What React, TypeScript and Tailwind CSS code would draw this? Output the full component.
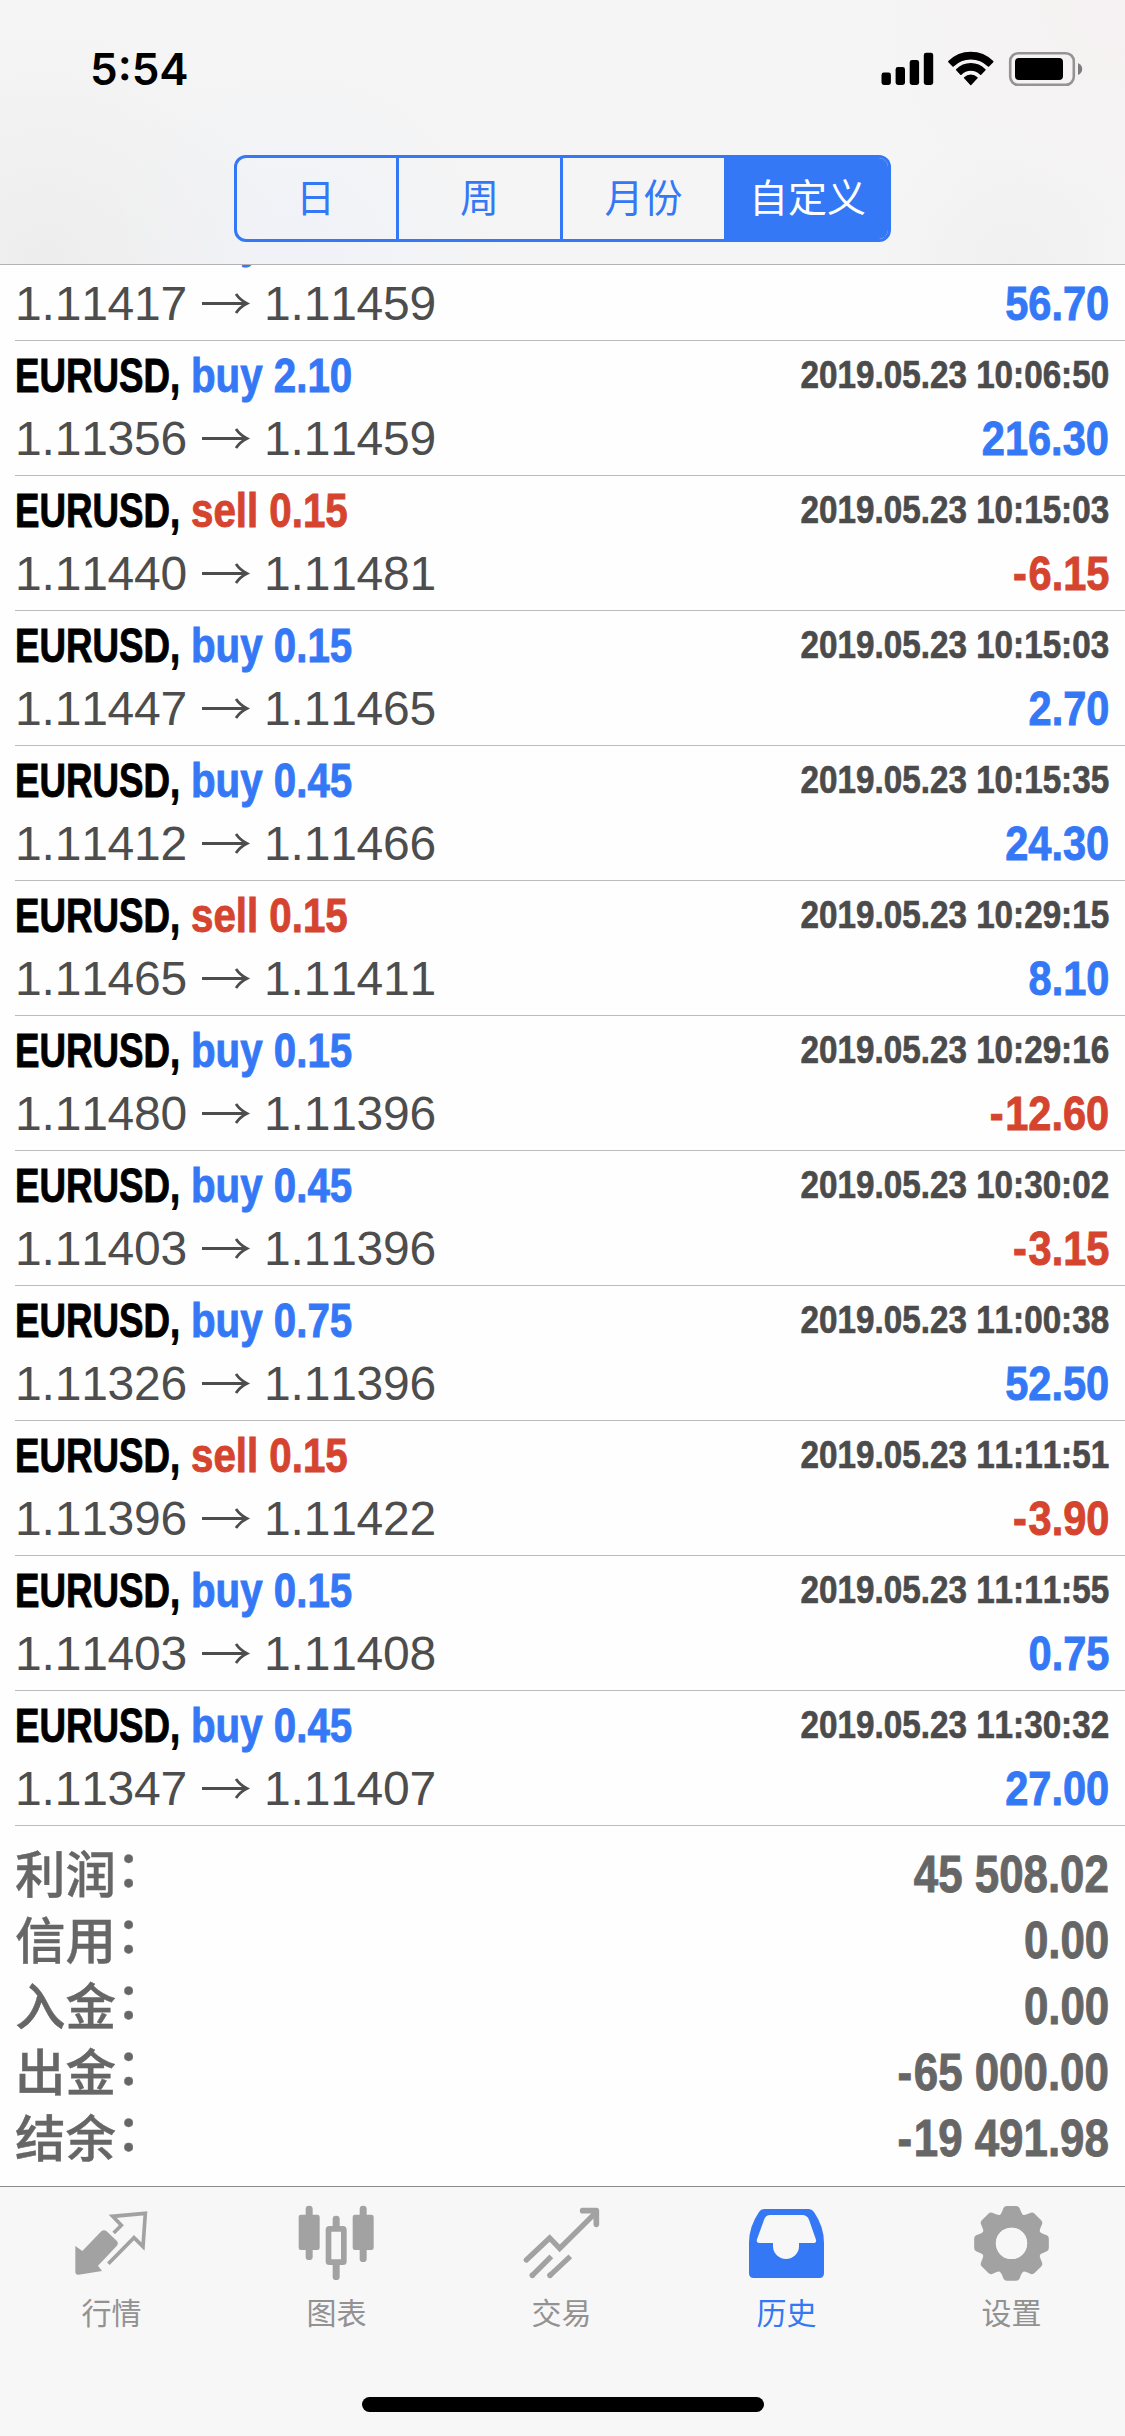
import type { ReactNode } from "react"
import clsx from "clsx"

type Deal = {
  side: "buy" | "sell"
  volume: string
  time: string
  open: string
  close: string
  profit: string
}

const deals: Deal[] = [
  { side: "buy", volume: "1.35", time: "2019.05.23 10:06:50", open: "1.11417", close: "1.11459", profit: "56.70" },
  { side: "buy", volume: "2.10", time: "2019.05.23 10:06:50", open: "1.11356", close: "1.11459", profit: "216.30" },
  { side: "sell", volume: "0.15", time: "2019.05.23 10:15:03", open: "1.11440", close: "1.11481", profit: "-6.15" },
  { side: "buy", volume: "0.15", time: "2019.05.23 10:15:03", open: "1.11447", close: "1.11465", profit: "2.70" },
  { side: "buy", volume: "0.45", time: "2019.05.23 10:15:35", open: "1.11412", close: "1.11466", profit: "24.30" },
  { side: "sell", volume: "0.15", time: "2019.05.23 10:29:15", open: "1.11465", close: "1.11411", profit: "8.10" },
  { side: "buy", volume: "0.15", time: "2019.05.23 10:29:16", open: "1.11480", close: "1.11396", profit: "-12.60" },
  { side: "buy", volume: "0.45", time: "2019.05.23 10:30:02", open: "1.11403", close: "1.11396", profit: "-3.15" },
  { side: "buy", volume: "0.75", time: "2019.05.23 11:00:38", open: "1.11326", close: "1.11396", profit: "52.50" },
  { side: "sell", volume: "0.15", time: "2019.05.23 11:11:51", open: "1.11396", close: "1.11422", profit: "-3.90" },
  { side: "buy", volume: "0.15", time: "2019.05.23 11:11:55", open: "1.11403", close: "1.11408", profit: "0.75" },
  { side: "buy", volume: "0.45", time: "2019.05.23 11:30:32", open: "1.11347", close: "1.11407", profit: "27.00" },
]

const summary = [
  { label: "利润", value: "45 508.02" },
  { label: "信用", value: "0.00" },
  { label: "入金", value: "0.00" },
  { label: "出金", value: "-65 000.00" },
  { label: "结余", value: "-19 491.98" },
]

const ranges = ["日", "周", "月份", "自定义"]

function StatusBar() {
  return (
    <div className="flex h-[155px] items-start justify-between pl-[90px] pr-[42px] pt-[42px]">
      <span className="font-['Inter'] text-[44px] font-semibold leading-[54px] text-black">5:54</span>
      <svg className="mt-[8px] h-[38px] w-[202px]" viewBox="881 50 202 38">
        <rect x="881.5" y="72.5" width="9.4" height="12.5" rx="2.4" />
        <rect x="895.6" y="67" width="9.4" height="18" rx="2.4" />
        <rect x="909.7" y="60" width="9.4" height="25" rx="2.4" />
        <rect x="923.8" y="52.7" width="9.4" height="32.3" rx="2.4" />
        <path d="M948.9 61.6a31 31 0 0 1 43.8 0l-4.2 4.4a25 25 0 0 0-35.4 0z" stroke="#000" strokeWidth="1.6" strokeLinejoin="round" />
        <path d="M956.7 69.7a20 20 0 0 1 28.2 0l-4.2 4.4a14 14 0 0 0-19.8 0z" stroke="#000" strokeWidth="1.6" strokeLinejoin="round" />
        <path d="M964.6 77.8a9 9 0 0 1 12.4 0l-6.2 6.7z" stroke="#000" strokeWidth="1.4" strokeLinejoin="round" />
        <rect x="1010.2" y="53.2" width="63.6" height="31.6" rx="8" fill="none" stroke="#959394" strokeWidth="2.6" />
        <rect x="1015" y="58" width="48" height="22" rx="4" />
        <path d="M1078 63q4.2 2 4.2 6t-4.2 6z" fill="#7d7b7c" />
      </svg>
    </div>
  )
}

function RangeControl() {
  return (
    <div className="mx-auto flex h-[87px] w-[657px] overflow-hidden rounded-[12px] border-[3px] border-[#3478f6]">
      {ranges.map((r, i) => (
        <div
          key={r}
          className={clsx(
            "flex items-center justify-center pb-[6px] font-['Noto_Sans_CJK_SC',sans-serif] text-[39px] leading-none",
            i === 0 ? "w-[159px] pr-[2px]" : "flex-1",
            i === ranges.length - 1 ? "bg-[#3478f6] text-white" : "text-[#3478f6]",
            i > 0 && "border-l-[3px] border-[#3478f6]"
          )}
        >
          {r}
        </div>
      ))}
    </div>
  )
}

// the minus sits slightly apart from the digits
function Amount({ value }: { value: string }) {
  if (!value.startsWith("-")) return <>{value}</>
  return (
    <>
      <span className="tracking-[2px]">-</span>
      {value.slice(1)}
    </>
  )
}

function DealRow({ deal, first }: { deal: Deal; first: boolean }) {
  return (
    <div className={clsx("ml-[15px] h-[135px] shrink-0 border-b border-[#bcbcbc] pr-[16px] pt-[3px]", first && "-mt-[59px]")}>
      <div className="flex h-[63px] justify-between">
        <div className="flex text-[48px] font-bold leading-[63px] [-webkit-text-stroke:0.9px]">
          <span className="block w-[176px] origin-left scale-x-[0.765] whitespace-nowrap text-black">EURUSD,</span>
          <span
            className={clsx(
              "block origin-left scale-x-[0.839] whitespace-nowrap",
              deal.side === "buy" ? "text-[#3478f6]" : "text-[#d5442f]"
            )}
          >
            {deal.side} {deal.volume}
          </span>
        </div>
        <span className="block origin-right scale-x-[0.852] text-[39px] font-bold leading-[61px] text-[#4b4b4b] [-webkit-text-stroke:0.7px]">
          {deal.time}
        </span>
      </div>
      <div className="flex h-[63px] justify-between text-[48px] leading-[63px]">
        <div className="flex items-center text-[#4d4d4d]">
          <span className="w-[187px] tracking-[-0.2px]">{deal.open}</span>
          <svg className="h-[24px] w-[62px]" viewBox="0 0 62 24" fill="none" stroke="#4d4d4d" strokeWidth="2.8">
            <path d="M0 11.5h44M34 2q4 6 11 9.500q-7 3.500-11 9.500" />
          </svg>
          <span className="tracking-[-0.2px]">{deal.close}</span>
        </div>
        <span
          className={clsx(
            "origin-right scale-x-[0.865] font-bold [-webkit-text-stroke:0.9px]",
            deal.profit.startsWith("-") ? "text-[#d5442f]" : "text-[#3478f6]"
          )}
        >
          <Amount value={deal.profit} />
        </span>
      </div>
    </div>
  )
}

function Tab({ label, viewBox, active, children }: { label: string; viewBox: string; active?: boolean; children: ReactNode }) {
  return (
    <div className={clsx("flex w-[225px] flex-col items-center pt-[13px]", active ? "text-[#3478f6]" : "text-[#929292]")}>
      <svg className="h-[85px] w-[80px]" viewBox={viewBox} fill={active ? "#3478f6" : "#a2a2a2"}>
        {children}
      </svg>
      <span className="mt-[6px] pl-[2px] font-['Noto_Sans_CJK_SC',sans-serif] text-[30px] leading-[40px]">{label}</span>
    </div>
  )
}

function TabBar() {
  return (
    <div className="flex h-[250px] shrink-0 flex-col justify-between border-t border-[#8a8a8a] bg-[#f7f7f7]">
      <div className="-ml-[2px] flex">
        <Tab label="行情" viewBox="213 90 240 255">
          <path d="M226 228L247 243L304 184q8-7 16 0l30 28q7 8 0 16L294 287L306 303L236 314q-10 1-10-9z" />
          <path d="M341 189L364 166L338 139L436 130L429 230L402 203L325 281" fill="none" stroke="#a2a2a2" strokeWidth="11" />
        </Tab>
        <Tab label="图表" viewBox="889 90 240 255">
          <rect x="897" y="134" width="63" height="106" rx="7" />
          <rect x="918" y="107" width="21" height="163" rx="10" />
          <rect x="1059" y="134" width="63" height="106" rx="7" />
          <rect x="1080" y="107" width="21" height="169" rx="10" />
          <rect x="999" y="137" width="21" height="42" rx="10" />
          <rect x="999" y="275" width="21" height="55" rx="10" />
          <rect x="986.500" y="176.500" width="46" height="100" rx="3" fill="none" stroke="#a2a2a2" strokeWidth="17" />
        </Tab>
        <Tab label="交易" viewBox="213 90 240 255">
          <g fill="none" stroke="#a2a2a2" strokeWidth="16">
            <path d="M229 270L299 204L329 235L438 127" strokeLinecap="round" />
            <path d="M398 122H439V163" strokeWidth="17" strokeLinecap="round" strokeLinejoin="round" />
            <path d="M247 316L304 259M300 316L361 259" />
          </g>
          <circle cx="247" cy="316" r="8.500" />
          <circle cx="300" cy="316" r="8.500" />
        </Tab>
        <Tab label="历史" viewBox="888 90 240 255" active>
          <path
            fillRule="evenodd"
            d="M943 117H1076q10 0 16 9q30 44 30 92V310q0 14-14 14H911q-14 0-14-14V218q0-48 30-92q6-9 16-9zM960 135q-12 0-17 12L921 208q-3 11 8 11H969V229a39 38 0 0 0 78 0V219H1090q10 0 8-10L1077 149q-6-14-20-14z"
          />
        </Tab>
        <Tab label="设置" viewBox="363 90 240 255">
          <g transform="translate(484.500 220)">
            {[0, 45, 90, 135, 180, 225, 270, 315].map((a) => (
              <path key={a} transform={`rotate(${a})`} d="M-40-70L-35-85Q-31-88-28-96L-24-106Q-21-112-14-112H14Q21-112 24-106L28-96Q31-88 35-85L40-70z" />
            ))}
            <circle r="69" fill="none" stroke="#a2a2a2" strokeWidth="44" />
            <circle r="47" fill="#f7f7f7" />
          </g>
        </Tab>
      </div>
      <div className="mx-auto mb-[24px] h-[15px] w-[402px] rounded-full bg-black" />
    </div>
  )
}

export default function App() {
  return (
    <div className="flex h-[2436px] w-[1125px] flex-col overflow-hidden bg-[#fefefe] font-['Liberation_Sans',Arial,sans-serif] [font-kerning:none]">
      <header className="relative z-10 h-[265px] shrink-0 border-b border-[#b2b2b2] bg-[#f5f5f5] bg-[radial-gradient(circle_at_4%_100%,#ededed_0,#ededed00_240px),radial-gradient(circle_at_26%_100%,#f0f2f8_0,#f3f3f800_220px),radial-gradient(circle_at_100%_0%,#f6f1f2_0,#f6f1f200_260px),radial-gradient(circle_at_90%_100%,#f0f0f0_0,#f0f0f000_140px)]">
        <StatusBar />
        <RangeControl />
      </header>
      <main className="flex-1">
        {deals.map((d, i) => (
          <DealRow key={i} deal={d} first={i === 0} />
        ))}
        <div className="pl-[15px] pr-[16px] pt-[16px] text-[#666]">
          {summary.map((s) => (
            <div key={s.label} className="flex h-[66px] justify-between text-[51px] leading-[66px]">
              <div className="flex font-['Noto_Sans_CJK_SC',sans-serif] text-[50.5px] font-medium leading-[58px] [-webkit-text-stroke:0.4px]">
                <span>{s.label}</span>
                <span className="-mt-[6px]">：</span>
              </div>
              <span className="origin-right scale-x-[0.86] font-bold [-webkit-text-stroke:0.9px]">
                <Amount value={s.value} />
              </span>
            </div>
          ))}
        </div>
      </main>
      <TabBar />
    </div>
  )
}
